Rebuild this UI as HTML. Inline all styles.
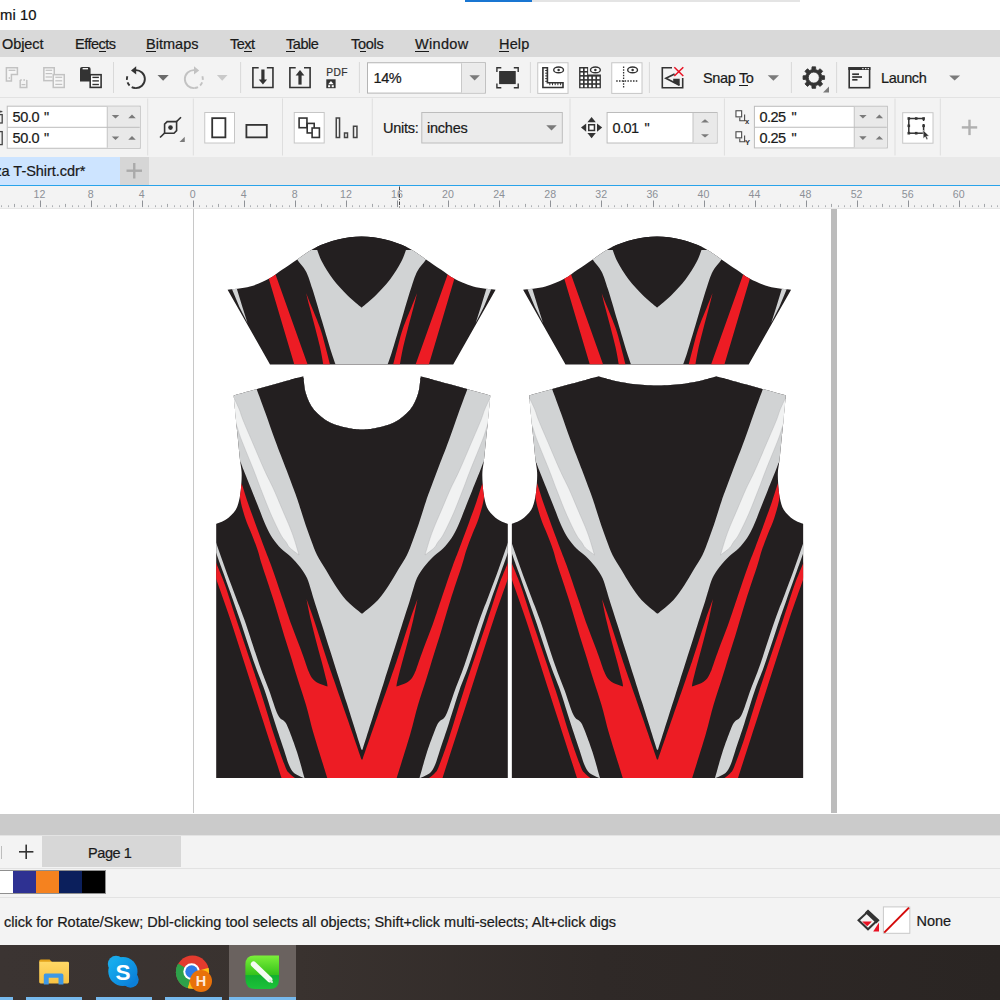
<!DOCTYPE html>
<html lang="en"><head><meta charset="utf-8"><title>CorelDRAW - T-Shirt.cdr</title>
<style>
html,body{margin:0;padding:0;background:#fff}
body{width:1000px;height:1000px;overflow:hidden;position:relative;font-family:"Liberation Sans", sans-serif}
#app{position:absolute;left:0;top:0;width:1000px;height:1000px;overflow:hidden;background:#fff}
.bar{position:absolute;left:0;width:1000px}
.t{position:absolute;white-space:nowrap;display:block;-webkit-text-stroke:0.22px currentColor}
.ul{position:absolute;display:block;height:1px}
.sep{position:absolute;width:1px;background:#dcdcdc}
.box{position:absolute;box-sizing:border-box;background:#fff;border:1px solid #b9b9b9}
.btn{position:absolute;box-sizing:border-box;background:#fff;border:1px solid #c4c4c4}
.ic{position:absolute;overflow:visible}
</style></head><body>
<div id="app">
<div class="bar" id="titlebar" style="top:0;height:30px;background:#fff"></div>
<div style="position:absolute;left:465px;top:0;width:67px;height:2px;background:#1976d2"></div>
<div style="position:absolute;left:532px;top:0;width:268px;height:2px;background:#e4e4e4"></div>
<div class="bar" id="menubar" style="top:30px;height:27px;background:#d9d9d9"></div>
<div class="bar" id="toolbar" style="top:57px;height:40px;background:#f3f3f3"></div>
<div class="bar" style="top:96.5px;height:1px;background:#e2e2e2"></div>
<div class="bar" id="propbar" style="top:97.5px;height:59px;background:#f3f3f3"></div>
<div class="bar" id="tabrow" style="top:156.5px;height:28.5px;background:#e9e9e9"></div>
<div style="position:absolute;left:0;top:157px;width:120px;height:28px;background:#cde4ff"></div>
<div style="position:absolute;left:120px;top:157px;width:28.5px;height:28px;background:#d6d6d6"></div>
<div class="bar" style="top:184.5px;height:1.2px;background:#29a3ea"></div>
<div class="bar" id="ruler" style="top:185.7px;height:22.8px;background:#f3f3f3"></div>
<div class="bar" style="top:207.5px;height:1px;background:#e6e6e6"></div>
<svg width="1000" height="23" viewBox="0 185.5 1000 23" style="position:absolute;left:0;top:185.5px" font-family='&quot;Liberation Sans&quot;, sans-serif'>
<rect x="40" y="200" width="1" height="6.6" fill="#8f9297"/>
<text x="39.5" y="197.8" font-size="10.6" fill="#8c9097" text-anchor="middle">12</text>
<rect x="91" y="200" width="1" height="6.6" fill="#8f9297"/>
<text x="90.6" y="197.8" font-size="10.6" fill="#8c9097" text-anchor="middle">8</text>
<rect x="142" y="200" width="1" height="6.6" fill="#8f9297"/>
<text x="141.6" y="197.8" font-size="10.6" fill="#8c9097" text-anchor="middle">4</text>
<rect x="193" y="200" width="1" height="6.6" fill="#8f9297"/>
<text x="192.7" y="197.8" font-size="10.6" fill="#8c9097" text-anchor="middle">0</text>
<rect x="244" y="200" width="1" height="6.6" fill="#8f9297"/>
<text x="243.8" y="197.8" font-size="10.6" fill="#8c9097" text-anchor="middle">4</text>
<rect x="295" y="200" width="1" height="6.6" fill="#8f9297"/>
<text x="294.8" y="197.8" font-size="10.6" fill="#8c9097" text-anchor="middle">8</text>
<rect x="346" y="200" width="1" height="6.6" fill="#8f9297"/>
<text x="345.9" y="197.8" font-size="10.6" fill="#8c9097" text-anchor="middle">12</text>
<rect x="397" y="200" width="1" height="6.6" fill="#8f9297"/>
<text x="397.0" y="197.8" font-size="10.6" fill="#8c9097" text-anchor="middle">16</text>
<rect x="448" y="200" width="1" height="6.6" fill="#8f9297"/>
<text x="448.0" y="197.8" font-size="10.6" fill="#8c9097" text-anchor="middle">20</text>
<rect x="499" y="200" width="1" height="6.6" fill="#8f9297"/>
<text x="499.1" y="197.8" font-size="10.6" fill="#8c9097" text-anchor="middle">24</text>
<rect x="550" y="200" width="1" height="6.6" fill="#8f9297"/>
<text x="550.2" y="197.8" font-size="10.6" fill="#8c9097" text-anchor="middle">28</text>
<rect x="601" y="200" width="1" height="6.6" fill="#8f9297"/>
<text x="601.2" y="197.8" font-size="10.6" fill="#8c9097" text-anchor="middle">32</text>
<rect x="653" y="200" width="1" height="6.6" fill="#8f9297"/>
<text x="652.3" y="197.8" font-size="10.6" fill="#8c9097" text-anchor="middle">36</text>
<rect x="704" y="200" width="1" height="6.6" fill="#8f9297"/>
<text x="703.4" y="197.8" font-size="10.6" fill="#8c9097" text-anchor="middle">40</text>
<rect x="755" y="200" width="1" height="6.6" fill="#8f9297"/>
<text x="754.4" y="197.8" font-size="10.6" fill="#8c9097" text-anchor="middle">44</text>
<rect x="806" y="200" width="1" height="6.6" fill="#8f9297"/>
<text x="805.5" y="197.8" font-size="10.6" fill="#8c9097" text-anchor="middle">48</text>
<rect x="857" y="200" width="1" height="6.6" fill="#8f9297"/>
<text x="856.6" y="197.8" font-size="10.6" fill="#8c9097" text-anchor="middle">52</text>
<rect x="908" y="200" width="1" height="6.6" fill="#8f9297"/>
<text x="907.7" y="197.8" font-size="10.6" fill="#8c9097" text-anchor="middle">56</text>
<rect x="959" y="200" width="1" height="6.6" fill="#8f9297"/>
<text x="958.7" y="197.8" font-size="10.6" fill="#8c9097" text-anchor="middle">60</text>
<rect x="1" y="204.8" width="1" height="1.8" fill="#adb0b4"/>
<rect x="8" y="204.8" width="1" height="1.8" fill="#adb0b4"/>
<rect x="14" y="203.4" width="1" height="3.2" fill="#a3a6aa"/>
<rect x="21" y="204.8" width="1" height="1.8" fill="#adb0b4"/>
<rect x="27" y="204.8" width="1" height="1.8" fill="#adb0b4"/>
<rect x="33" y="204.8" width="1" height="1.8" fill="#adb0b4"/>
<rect x="46" y="204.8" width="1" height="1.8" fill="#adb0b4"/>
<rect x="52" y="204.8" width="1" height="1.8" fill="#adb0b4"/>
<rect x="59" y="204.8" width="1" height="1.8" fill="#adb0b4"/>
<rect x="65" y="203.4" width="1" height="3.2" fill="#a3a6aa"/>
<rect x="72" y="204.8" width="1" height="1.8" fill="#adb0b4"/>
<rect x="78" y="204.8" width="1" height="1.8" fill="#adb0b4"/>
<rect x="84" y="204.8" width="1" height="1.8" fill="#adb0b4"/>
<rect x="97" y="204.8" width="1" height="1.8" fill="#adb0b4"/>
<rect x="104" y="204.8" width="1" height="1.8" fill="#adb0b4"/>
<rect x="110" y="204.8" width="1" height="1.8" fill="#adb0b4"/>
<rect x="116" y="203.4" width="1" height="3.2" fill="#a3a6aa"/>
<rect x="123" y="204.8" width="1" height="1.8" fill="#adb0b4"/>
<rect x="129" y="204.8" width="1" height="1.8" fill="#adb0b4"/>
<rect x="135" y="204.8" width="1" height="1.8" fill="#adb0b4"/>
<rect x="148" y="204.8" width="1" height="1.8" fill="#adb0b4"/>
<rect x="155" y="204.8" width="1" height="1.8" fill="#adb0b4"/>
<rect x="161" y="204.8" width="1" height="1.8" fill="#adb0b4"/>
<rect x="167" y="203.4" width="1" height="3.2" fill="#a3a6aa"/>
<rect x="174" y="204.8" width="1" height="1.8" fill="#adb0b4"/>
<rect x="180" y="204.8" width="1" height="1.8" fill="#adb0b4"/>
<rect x="187" y="204.8" width="1" height="1.8" fill="#adb0b4"/>
<rect x="199" y="204.8" width="1" height="1.8" fill="#adb0b4"/>
<rect x="206" y="204.8" width="1" height="1.8" fill="#adb0b4"/>
<rect x="212" y="204.8" width="1" height="1.8" fill="#adb0b4"/>
<rect x="218" y="203.4" width="1" height="3.2" fill="#a3a6aa"/>
<rect x="225" y="204.8" width="1" height="1.8" fill="#adb0b4"/>
<rect x="231" y="204.8" width="1" height="1.8" fill="#adb0b4"/>
<rect x="238" y="204.8" width="1" height="1.8" fill="#adb0b4"/>
<rect x="250" y="204.8" width="1" height="1.8" fill="#adb0b4"/>
<rect x="257" y="204.8" width="1" height="1.8" fill="#adb0b4"/>
<rect x="263" y="204.8" width="1" height="1.8" fill="#adb0b4"/>
<rect x="270" y="203.4" width="1" height="3.2" fill="#a3a6aa"/>
<rect x="276" y="204.8" width="1" height="1.8" fill="#adb0b4"/>
<rect x="282" y="204.8" width="1" height="1.8" fill="#adb0b4"/>
<rect x="289" y="204.8" width="1" height="1.8" fill="#adb0b4"/>
<rect x="301" y="204.8" width="1" height="1.8" fill="#adb0b4"/>
<rect x="308" y="204.8" width="1" height="1.8" fill="#adb0b4"/>
<rect x="314" y="204.8" width="1" height="1.8" fill="#adb0b4"/>
<rect x="321" y="203.4" width="1" height="3.2" fill="#a3a6aa"/>
<rect x="327" y="204.8" width="1" height="1.8" fill="#adb0b4"/>
<rect x="333" y="204.8" width="1" height="1.8" fill="#adb0b4"/>
<rect x="340" y="204.8" width="1" height="1.8" fill="#adb0b4"/>
<rect x="352" y="204.8" width="1" height="1.8" fill="#adb0b4"/>
<rect x="359" y="204.8" width="1" height="1.8" fill="#adb0b4"/>
<rect x="365" y="204.8" width="1" height="1.8" fill="#adb0b4"/>
<rect x="372" y="203.4" width="1" height="3.2" fill="#a3a6aa"/>
<rect x="378" y="204.8" width="1" height="1.8" fill="#adb0b4"/>
<rect x="384" y="204.8" width="1" height="1.8" fill="#adb0b4"/>
<rect x="391" y="204.8" width="1" height="1.8" fill="#adb0b4"/>
<rect x="404" y="204.8" width="1" height="1.8" fill="#adb0b4"/>
<rect x="410" y="204.8" width="1" height="1.8" fill="#adb0b4"/>
<rect x="416" y="204.8" width="1" height="1.8" fill="#adb0b4"/>
<rect x="423" y="203.4" width="1" height="3.2" fill="#a3a6aa"/>
<rect x="429" y="204.8" width="1" height="1.8" fill="#adb0b4"/>
<rect x="435" y="204.8" width="1" height="1.8" fill="#adb0b4"/>
<rect x="442" y="204.8" width="1" height="1.8" fill="#adb0b4"/>
<rect x="455" y="204.8" width="1" height="1.8" fill="#adb0b4"/>
<rect x="461" y="204.8" width="1" height="1.8" fill="#adb0b4"/>
<rect x="467" y="204.8" width="1" height="1.8" fill="#adb0b4"/>
<rect x="474" y="203.4" width="1" height="3.2" fill="#a3a6aa"/>
<rect x="480" y="204.8" width="1" height="1.8" fill="#adb0b4"/>
<rect x="487" y="204.8" width="1" height="1.8" fill="#adb0b4"/>
<rect x="493" y="204.8" width="1" height="1.8" fill="#adb0b4"/>
<rect x="506" y="204.8" width="1" height="1.8" fill="#adb0b4"/>
<rect x="512" y="204.8" width="1" height="1.8" fill="#adb0b4"/>
<rect x="518" y="204.8" width="1" height="1.8" fill="#adb0b4"/>
<rect x="525" y="203.4" width="1" height="3.2" fill="#a3a6aa"/>
<rect x="531" y="204.8" width="1" height="1.8" fill="#adb0b4"/>
<rect x="538" y="204.8" width="1" height="1.8" fill="#adb0b4"/>
<rect x="544" y="204.8" width="1" height="1.8" fill="#adb0b4"/>
<rect x="557" y="204.8" width="1" height="1.8" fill="#adb0b4"/>
<rect x="563" y="204.8" width="1" height="1.8" fill="#adb0b4"/>
<rect x="570" y="204.8" width="1" height="1.8" fill="#adb0b4"/>
<rect x="576" y="203.4" width="1" height="3.2" fill="#a3a6aa"/>
<rect x="582" y="204.8" width="1" height="1.8" fill="#adb0b4"/>
<rect x="589" y="204.8" width="1" height="1.8" fill="#adb0b4"/>
<rect x="595" y="204.8" width="1" height="1.8" fill="#adb0b4"/>
<rect x="608" y="204.8" width="1" height="1.8" fill="#adb0b4"/>
<rect x="614" y="204.8" width="1" height="1.8" fill="#adb0b4"/>
<rect x="621" y="204.8" width="1" height="1.8" fill="#adb0b4"/>
<rect x="627" y="203.4" width="1" height="3.2" fill="#a3a6aa"/>
<rect x="633" y="204.8" width="1" height="1.8" fill="#adb0b4"/>
<rect x="640" y="204.8" width="1" height="1.8" fill="#adb0b4"/>
<rect x="646" y="204.8" width="1" height="1.8" fill="#adb0b4"/>
<rect x="659" y="204.8" width="1" height="1.8" fill="#adb0b4"/>
<rect x="665" y="204.8" width="1" height="1.8" fill="#adb0b4"/>
<rect x="672" y="204.8" width="1" height="1.8" fill="#adb0b4"/>
<rect x="678" y="203.4" width="1" height="3.2" fill="#a3a6aa"/>
<rect x="684" y="204.8" width="1" height="1.8" fill="#adb0b4"/>
<rect x="691" y="204.8" width="1" height="1.8" fill="#adb0b4"/>
<rect x="697" y="204.8" width="1" height="1.8" fill="#adb0b4"/>
<rect x="710" y="204.8" width="1" height="1.8" fill="#adb0b4"/>
<rect x="716" y="204.8" width="1" height="1.8" fill="#adb0b4"/>
<rect x="723" y="204.8" width="1" height="1.8" fill="#adb0b4"/>
<rect x="729" y="203.4" width="1" height="3.2" fill="#a3a6aa"/>
<rect x="735" y="204.8" width="1" height="1.8" fill="#adb0b4"/>
<rect x="742" y="204.8" width="1" height="1.8" fill="#adb0b4"/>
<rect x="748" y="204.8" width="1" height="1.8" fill="#adb0b4"/>
<rect x="761" y="204.8" width="1" height="1.8" fill="#adb0b4"/>
<rect x="767" y="204.8" width="1" height="1.8" fill="#adb0b4"/>
<rect x="774" y="204.8" width="1" height="1.8" fill="#adb0b4"/>
<rect x="780" y="203.4" width="1" height="3.2" fill="#a3a6aa"/>
<rect x="787" y="204.8" width="1" height="1.8" fill="#adb0b4"/>
<rect x="793" y="204.8" width="1" height="1.8" fill="#adb0b4"/>
<rect x="799" y="204.8" width="1" height="1.8" fill="#adb0b4"/>
<rect x="812" y="204.8" width="1" height="1.8" fill="#adb0b4"/>
<rect x="818" y="204.8" width="1" height="1.8" fill="#adb0b4"/>
<rect x="825" y="204.8" width="1" height="1.8" fill="#adb0b4"/>
<rect x="831" y="203.4" width="1" height="3.2" fill="#a3a6aa"/>
<rect x="838" y="204.8" width="1" height="1.8" fill="#adb0b4"/>
<rect x="844" y="204.8" width="1" height="1.8" fill="#adb0b4"/>
<rect x="850" y="204.8" width="1" height="1.8" fill="#adb0b4"/>
<rect x="863" y="204.8" width="1" height="1.8" fill="#adb0b4"/>
<rect x="870" y="204.8" width="1" height="1.8" fill="#adb0b4"/>
<rect x="876" y="204.8" width="1" height="1.8" fill="#adb0b4"/>
<rect x="882" y="203.4" width="1" height="3.2" fill="#a3a6aa"/>
<rect x="889" y="204.8" width="1" height="1.8" fill="#adb0b4"/>
<rect x="895" y="204.8" width="1" height="1.8" fill="#adb0b4"/>
<rect x="901" y="204.8" width="1" height="1.8" fill="#adb0b4"/>
<rect x="914" y="204.8" width="1" height="1.8" fill="#adb0b4"/>
<rect x="921" y="204.8" width="1" height="1.8" fill="#adb0b4"/>
<rect x="927" y="204.8" width="1" height="1.8" fill="#adb0b4"/>
<rect x="933" y="203.4" width="1" height="3.2" fill="#a3a6aa"/>
<rect x="940" y="204.8" width="1" height="1.8" fill="#adb0b4"/>
<rect x="946" y="204.8" width="1" height="1.8" fill="#adb0b4"/>
<rect x="953" y="204.8" width="1" height="1.8" fill="#adb0b4"/>
<rect x="965" y="204.8" width="1" height="1.8" fill="#adb0b4"/>
<rect x="972" y="204.8" width="1" height="1.8" fill="#adb0b4"/>
<rect x="978" y="204.8" width="1" height="1.8" fill="#adb0b4"/>
<rect x="984" y="203.4" width="1" height="3.2" fill="#a3a6aa"/>
<rect x="991" y="204.8" width="1" height="1.8" fill="#adb0b4"/>
<rect x="997" y="204.8" width="1" height="1.8" fill="#adb0b4"/>
<line x1="399.5" y1="186" x2="399.5" y2="209" stroke="#4a4a4a" stroke-width="1" stroke-dasharray="3.5 1.5 1 1.5"/>
</svg>
<div class="bar" id="canvas" style="top:208.5px;height:605px;background:#fff;overflow:hidden">
<div style="position:absolute;left:192.7px;top:0;width:1.5px;height:604.5px;background:#c8c8c8"></div>
<div style="position:absolute;left:831px;top:0;width:6px;height:604.2px;background:#bcbcbc"></div>
<div style="position:absolute;left:0;top:-0.5px;width:1000px;height:604px"><svg id="art" width="1000" height="604" viewBox="0 208 1000 604" style="position:absolute;left:0;top:0">
<defs>
<clipPath id="cf"><path d="M303.3,376.2C291.7,379.4 245.3,392.2 233.7,395.4C234.1,399.5 235.3,412.6 236.0,420.0 C236.7,427.4 237.3,433.3 238.0,440.0 C238.7,446.7 239.4,454.7 240.0,460.0 C240.6,465.3 241.4,468.0 241.6,472.0 C241.8,476.0 241.6,479.7 241.3,484.0 C241.0,488.3 240.6,493.7 239.6,498.0 C238.6,502.3 237.9,506.4 235.6,510.0 C233.3,513.6 229.2,517.3 226.0,519.6 C222.8,521.9 217.8,523.3 216.2,524.0L216.2,778.0C264.8,778.0 459.2,778.0 507.8,778.0L507.8,524.0C506.2,523.3 501.2,521.9 498.0,519.6 C494.8,517.3 490.7,513.6 488.4,510.0 C486.1,506.4 485.3,502.3 484.4,498.0 C483.4,493.7 483.0,488.3 482.7,484.0 C482.4,479.7 482.2,476.0 482.4,472.0 C482.6,468.0 483.4,465.3 484.0,460.0 C484.6,454.7 485.3,446.7 486.0,440.0 C486.7,433.3 487.3,427.4 488.0,420.0 C488.7,412.6 489.9,399.5 490.3,395.4C478.7,392.2 432.3,379.4 420.7,376.2C420.2,379.1 419.8,388.2 418.0,393.8 C416.2,399.4 414.0,405.0 410.0,409.8 C406.0,414.6 399.9,419.5 394.0,422.6 C388.1,425.7 380.1,427.1 374.8,428.2 C369.5,429.3 364.1,429.3 362.0,429.5C359.9,429.3 354.5,429.3 349.2,428.2 C343.9,427.1 335.9,425.7 330.0,422.6 C324.1,419.5 318.0,414.6 314.0,409.8 C310.0,405.0 307.8,399.4 306.0,393.8 C304.2,388.2 303.8,379.1 303.3,376.2Z"/></clipPath>
<clipPath id="cb"><path d="M303.3,376.2C291.7,379.4 245.3,392.2 233.7,395.4C234.1,399.5 235.3,412.6 236.0,420.0 C236.7,427.4 237.3,433.3 238.0,440.0 C238.7,446.7 239.4,454.7 240.0,460.0 C240.6,465.3 241.4,468.0 241.6,472.0 C241.8,476.0 241.6,479.7 241.3,484.0 C241.0,488.3 240.6,493.7 239.6,498.0 C238.6,502.3 237.9,506.4 235.6,510.0 C233.3,513.6 229.2,517.3 226.0,519.6 C222.8,521.9 217.8,523.3 216.2,524.0L216.2,778.0C264.8,778.0 459.2,778.0 507.8,778.0L507.8,524.0C506.2,523.3 501.2,521.9 498.0,519.6 C494.8,517.3 490.7,513.6 488.4,510.0 C486.1,506.4 485.3,502.3 484.4,498.0 C483.4,493.7 483.0,488.3 482.7,484.0 C482.4,479.7 482.2,476.0 482.4,472.0 C482.6,468.0 483.4,465.3 484.0,460.0 C484.6,454.7 485.3,446.7 486.0,440.0 C486.7,433.3 487.3,427.4 488.0,420.0 C488.7,412.6 489.9,399.5 490.3,395.4C478.7,392.2 432.3,379.4 420.7,376.2C417.9,377.0 410.1,379.6 404.0,381.0 C397.9,382.4 391.0,383.5 384.0,384.3 C377.0,385.1 365.7,385.4 362.0,385.6C358.3,385.4 347.0,385.1 340.0,384.3 C333.0,383.5 326.1,382.4 320.0,381.0 C313.9,379.6 306.1,377.0 303.3,376.2Z"/></clipPath>
<clipPath id="cs"><path d="M227.6,289.8C231.3,289.3 243.1,288.5 250.0,286.6 C256.9,284.7 263.9,281.4 269.2,278.6 C274.5,275.8 277.3,273.0 282.0,269.8 C286.7,266.6 291.6,263.1 297.2,259.4 C302.8,255.7 308.8,250.7 315.6,247.4 C322.4,244.1 330.3,241.2 338.0,239.4 C345.7,237.6 353.7,236.4 361.6,236.4 C369.5,236.4 377.5,237.6 385.2,239.4 C392.9,241.2 400.8,244.1 407.6,247.4 C414.4,250.7 420.4,255.7 426.0,259.4 C431.6,263.1 436.5,266.6 441.2,269.8 C445.9,273.0 448.7,275.8 454.0,278.6 C459.3,281.4 466.3,284.7 473.2,286.6 C480.1,288.5 491.9,289.3 495.6,289.8L453.2,364.5C422.7,364.5 300.5,364.5 270.0,364.5Z"/></clipPath>
<g id="bd">
<rect x="200" y="370" width="330" height="420" fill="#231f20"/>
<path d="M211.0,550.0C211.9,552.2 213.9,557.2 216.2,563.0 C218.5,568.8 221.6,575.5 225.0,585.0 C228.4,594.5 230.7,602.5 236.5,620.0 C242.3,637.5 253.6,670.3 260.0,690.0 C266.4,709.7 270.8,725.3 275.0,738.0 C279.2,750.7 282.7,760.2 285.0,766.0 C287.3,771.8 287.3,771.0 289.0,773.0 C290.7,775.0 294.0,777.2 295.0,778.0L281.5,778.0C277.1,764.3 263.5,722.3 255.0,696.0 C246.5,669.7 237.0,639.5 230.5,620.0 C224.0,600.5 220.1,590.2 216.2,579.0 C212.3,567.8 208.5,557.3 207.0,553.0Z" fill="#ed1c24"/>
<path d="M211.0,550.0C211.9,552.2 213.9,557.2 216.2,563.0 C218.5,568.8 221.6,575.5 225.0,585.0 C228.4,594.5 230.7,602.5 236.5,620.0 C242.3,637.5 253.6,670.3 260.0,690.0 C266.4,709.7 270.8,725.3 275.0,738.0 C279.2,750.7 282.7,760.2 285.0,766.0 C287.3,771.8 287.3,771.0 289.0,773.0 C290.7,775.0 294.0,777.2 295.0,778.0L281.5,778.0C277.1,764.3 263.5,722.3 255.0,696.0 C246.5,669.7 237.0,639.5 230.5,620.0 C224.0,600.5 220.1,590.2 216.2,579.0 C212.3,567.8 208.5,557.3 207.0,553.0Z" fill="#ed1c24" transform="translate(724.0,0) scale(-1,1)"/>
<path d="M208.0,520.0C209.4,523.8 213.4,535.0 216.2,543.0 C219.0,551.0 221.9,559.3 225.0,568.0 C228.1,576.7 231.8,586.3 235.0,595.0 C238.2,603.7 240.4,608.3 244.5,620.0 C248.6,631.7 255.4,653.3 259.5,665.0 C263.6,676.7 265.9,681.7 269.0,690.0 C272.1,698.3 275.3,709.7 278.0,715.0 C280.7,720.3 283.2,719.5 285.0,722.0 C286.8,724.5 287.0,725.0 289.0,730.0 C291.0,735.0 294.4,744.0 297.0,752.0 C299.6,760.0 303.2,773.7 304.5,778.0L304.0,778.0C302.3,777.2 296.5,775.2 294.0,773.0 C291.5,770.8 290.7,768.8 289.0,765.0 C287.3,761.2 286.3,757.0 284.0,750.0 C281.7,743.0 278.2,733.0 275.0,723.0 C271.8,713.0 267.8,699.7 264.5,690.0 C261.2,680.3 259.1,676.7 255.0,665.0 C250.9,653.3 243.7,630.8 240.0,620.0 C236.3,609.2 235.8,608.0 233.0,600.0 C230.2,592.0 225.8,579.8 223.0,572.0 C220.2,564.2 219.0,561.0 216.2,553.0 C213.4,545.0 207.7,528.8 206.0,524.0Z" fill="#d1d3d4"/>
<path d="M208.0,520.0C209.4,523.8 213.4,535.0 216.2,543.0 C219.0,551.0 221.9,559.3 225.0,568.0 C228.1,576.7 231.8,586.3 235.0,595.0 C238.2,603.7 240.4,608.3 244.5,620.0 C248.6,631.7 255.4,653.3 259.5,665.0 C263.6,676.7 265.9,681.7 269.0,690.0 C272.1,698.3 275.3,709.7 278.0,715.0 C280.7,720.3 283.2,719.5 285.0,722.0 C286.8,724.5 287.0,725.0 289.0,730.0 C291.0,735.0 294.4,744.0 297.0,752.0 C299.6,760.0 303.2,773.7 304.5,778.0L304.0,778.0C302.3,777.2 296.5,775.2 294.0,773.0 C291.5,770.8 290.7,768.8 289.0,765.0 C287.3,761.2 286.3,757.0 284.0,750.0 C281.7,743.0 278.2,733.0 275.0,723.0 C271.8,713.0 267.8,699.7 264.5,690.0 C261.2,680.3 259.1,676.7 255.0,665.0 C250.9,653.3 243.7,630.8 240.0,620.0 C236.3,609.2 235.8,608.0 233.0,600.0 C230.2,592.0 225.8,579.8 223.0,572.0 C220.2,564.2 219.0,561.0 216.2,553.0 C213.4,545.0 207.7,528.8 206.0,524.0Z" fill="#d1d3d4" transform="translate(724.0,0) scale(-1,1)"/>
<path d="M241.6,483.2C242.6,486.3 245.4,495.5 247.6,502.0 C249.8,508.5 251.9,514.0 254.8,522.0 C257.7,530.0 262.5,542.8 265.2,550.0 C267.9,557.2 268.0,556.7 271.0,565.0 C274.0,573.3 279.6,590.0 283.0,600.0 C286.4,610.0 288.5,616.7 291.5,625.0 C294.5,633.3 298.2,642.5 301.0,650.0 C303.8,657.5 306.8,666.7 308.0,670.0C308.7,671.3 310.3,675.8 312.0,678.0 C313.7,680.2 315.4,681.6 318.0,683.0 C320.6,684.4 326.0,686.0 327.6,686.6C327.4,685.5 327.5,684.4 326.4,680.0 C325.3,675.6 323.0,666.7 321.2,660.0 C319.4,653.3 317.5,646.7 315.8,640.0 C314.1,633.3 312.4,626.8 310.8,620.0 C309.2,613.2 307.2,602.5 306.5,599.0C307.8,602.5 311.7,613.2 314.0,620.0 C316.3,626.8 318.3,633.3 320.5,640.0 C322.7,646.7 324.8,653.3 327.0,660.0 C329.2,666.7 330.6,670.5 333.9,680.0 C337.2,689.5 342.2,703.8 346.8,717.0 C351.4,730.2 359.1,752.3 361.5,759.4L362.5,759.4C364.9,752.3 372.6,730.2 377.2,717.0 C381.8,703.8 386.8,689.5 390.1,680.0 C393.4,670.5 394.8,666.7 397.0,660.0 C399.2,653.3 401.3,646.7 403.5,640.0 C405.7,633.3 407.7,626.8 410.0,620.0 C412.3,613.2 416.2,602.5 417.5,599.0C416.8,602.5 414.8,613.2 413.2,620.0 C411.6,626.8 409.9,633.3 408.2,640.0 C406.5,646.7 404.6,653.3 402.8,660.0 C401.0,666.7 398.7,675.6 397.6,680.0 C396.5,684.4 396.6,685.5 396.4,686.6C398.0,686.0 403.4,684.4 406.0,683.0 C408.6,681.6 410.3,680.2 412.0,678.0 C413.7,675.8 415.3,671.3 416.0,670.0C417.2,666.7 420.2,657.5 423.0,650.0 C425.8,642.5 429.5,633.3 432.5,625.0 C435.5,616.7 437.6,610.0 441.0,600.0 C444.4,590.0 450.0,573.3 453.0,565.0 C456.0,556.7 456.1,557.2 458.8,550.0 C461.5,542.8 466.3,530.0 469.2,522.0 C472.1,514.0 474.2,508.5 476.4,502.0 C478.6,495.5 481.4,486.3 482.4,483.2C482.7,485.5 484.6,491.4 484.0,497.2 C483.4,503.0 480.7,511.9 478.8,518.0 C476.9,524.1 474.5,528.7 472.4,534.0 C470.3,539.3 468.1,544.8 466.4,550.0 C464.7,555.2 464.6,556.7 462.0,565.0 C459.4,573.3 453.9,589.2 450.5,600.0 C447.1,610.8 444.2,621.0 441.5,630.0 C438.8,639.0 436.6,645.7 434.0,654.0 C431.4,662.3 428.7,671.5 426.0,680.0 C423.3,688.5 420.7,695.8 418.0,705.0 C415.3,714.2 413.6,722.8 410.0,735.0 C406.4,747.2 398.9,770.8 396.7,778.0L327.3,778.0C325.1,770.8 317.6,747.2 314.0,735.0 C310.4,722.8 308.7,714.2 306.0,705.0 C303.3,695.8 300.7,688.5 298.0,680.0 C295.3,671.5 292.6,662.3 290.0,654.0 C287.4,645.7 285.2,639.0 282.5,630.0 C279.8,621.0 276.9,610.8 273.5,600.0 C270.1,589.2 264.6,573.3 262.0,565.0 C259.4,556.7 259.3,555.2 257.6,550.0 C255.9,544.8 253.7,539.3 251.6,534.0 C249.5,528.7 247.1,524.1 245.2,518.0 C243.3,511.9 240.6,503.0 240.0,497.2 C239.4,491.4 241.3,485.5 241.6,483.2Z" fill="#ed1c24"/>
<path d="M226.0,380.0C226.0,390.0 223.5,426.2 226.0,440.0 C228.5,453.8 238.5,459.2 241.0,463.0C241.4,464.2 241.8,465.5 243.6,470.0 C245.4,474.5 249.2,484.0 251.6,490.0 C254.0,496.0 255.6,500.0 258.0,506.0 C260.4,512.0 263.6,520.7 266.0,526.0 C268.4,531.3 269.9,534.2 272.4,538.0 C274.9,541.8 278.1,545.5 281.0,548.5 C283.9,551.5 286.8,552.9 290.0,556.0 C293.2,559.1 297.2,563.3 300.0,567.0 C302.8,570.7 305.2,574.2 307.0,578.0 C308.8,581.8 309.8,586.3 311.0,590.0 C312.2,593.7 312.2,594.2 314.0,600.0 C315.8,605.8 319.4,616.7 322.0,625.0 C324.6,633.3 327.0,640.8 329.9,650.0 C332.8,659.2 336.7,671.4 339.4,680.0 C342.1,688.6 342.6,690.2 346.3,701.8 C350.0,713.4 359.0,741.8 361.5,749.8L362.5,749.8C365.0,741.8 374.0,713.4 377.7,701.8 C381.4,690.2 381.9,688.6 384.6,680.0 C387.3,671.4 391.2,659.2 394.1,650.0 C397.0,640.8 399.4,633.3 402.0,625.0 C404.6,616.7 408.2,605.8 410.0,600.0 C411.8,594.2 411.8,593.7 413.0,590.0 C414.2,586.3 415.2,581.8 417.0,578.0 C418.8,574.2 421.2,570.7 424.0,567.0 C426.8,563.3 430.8,559.1 434.0,556.0 C437.2,552.9 440.1,551.5 443.0,548.5 C445.9,545.5 449.1,541.8 451.6,538.0 C454.1,534.2 455.6,531.3 458.0,526.0 C460.4,520.7 463.6,512.0 466.0,506.0 C468.4,500.0 470.0,496.0 472.4,490.0 C474.8,484.0 478.6,474.5 480.4,470.0 C482.2,465.5 482.6,464.2 483.0,463.0C485.5,459.2 495.5,453.8 498.0,440.0 C500.5,426.2 498.0,390.0 498.0,380.0Z" fill="#d1d3d4"/>
<path d="M252.8,378.0C253.5,379.9 256.1,387.6 256.8,389.5C258.3,393.6 262.8,405.6 265.8,414.0 C268.8,422.4 271.6,430.7 275.0,440.0 C278.4,449.3 283.3,461.7 286.5,470.0 C289.7,478.3 292.1,485.0 294.0,490.0 C295.9,495.0 295.9,495.0 297.6,500.0 C299.3,505.0 301.8,513.3 304.0,520.0 C306.2,526.7 308.8,534.2 311.0,540.0 C313.2,545.8 314.5,550.0 317.0,555.0 C319.5,560.0 323.0,565.0 326.0,570.0 C329.0,575.0 331.7,580.0 335.0,585.0 C338.3,590.0 341.6,595.2 346.0,600.0 C350.4,604.8 358.9,611.2 361.5,613.5L362.5,613.5C365.1,611.2 373.6,604.8 378.0,600.0 C382.4,595.2 385.7,590.0 389.0,585.0 C392.3,580.0 395.0,575.0 398.0,570.0 C401.0,565.0 404.5,560.0 407.0,555.0 C409.5,550.0 410.8,545.8 413.0,540.0 C415.2,534.2 417.8,526.7 420.0,520.0 C422.2,513.3 424.7,505.0 426.4,500.0 C428.1,495.0 428.1,495.0 430.0,490.0 C431.9,485.0 434.3,478.3 437.5,470.0 C440.7,461.7 445.6,449.3 449.0,440.0 C452.4,430.7 455.2,422.4 458.2,414.0 C461.2,405.6 465.7,393.6 467.2,389.5C467.9,387.6 470.5,379.9 471.2,378.0Z" fill="#231f20"/>
<path d="M234.5,399.0C235.3,400.8 238.1,406.5 239.5,410.0 C240.9,413.5 241.0,415.0 243.0,420.0 C245.0,425.0 247.9,431.7 251.5,440.0 C255.1,448.3 260.6,461.7 264.4,470.0 C268.1,478.3 271.0,483.3 274.0,490.0 C277.0,496.7 279.8,503.7 282.5,510.0 C285.2,516.3 288.0,522.6 290.0,527.6 C292.0,532.6 293.0,535.4 294.5,540.0 C296.0,544.6 298.2,552.5 299.0,555.0C297.5,553.8 292.2,550.2 290.0,548.0 C287.8,545.8 287.6,544.3 286.0,542.0 C284.4,539.7 282.9,538.7 280.4,534.0 C277.9,529.3 274.0,521.3 270.8,514.0 C267.6,506.7 264.1,497.3 261.2,490.0 C258.3,482.7 256.9,478.3 253.6,470.0 C250.3,461.7 244.2,447.0 241.5,440.0 C238.8,433.0 238.9,432.2 237.5,428.0 C236.1,423.8 234.2,419.8 233.0,415.0 C231.8,410.2 230.5,401.7 230.0,399.0Z" fill="#f1f2f2" stroke="#a7a9ac" stroke-width="0.35"/>
<path d="M234.5,399.0C235.3,400.8 238.1,406.5 239.5,410.0 C240.9,413.5 241.0,415.0 243.0,420.0 C245.0,425.0 247.9,431.7 251.5,440.0 C255.1,448.3 260.6,461.7 264.4,470.0 C268.1,478.3 271.0,483.3 274.0,490.0 C277.0,496.7 279.8,503.7 282.5,510.0 C285.2,516.3 288.0,522.6 290.0,527.6 C292.0,532.6 293.0,535.4 294.5,540.0 C296.0,544.6 298.2,552.5 299.0,555.0C297.5,553.8 292.2,550.2 290.0,548.0 C287.8,545.8 287.6,544.3 286.0,542.0 C284.4,539.7 282.9,538.7 280.4,534.0 C277.9,529.3 274.0,521.3 270.8,514.0 C267.6,506.7 264.1,497.3 261.2,490.0 C258.3,482.7 256.9,478.3 253.6,470.0 C250.3,461.7 244.2,447.0 241.5,440.0 C238.8,433.0 238.9,432.2 237.5,428.0 C236.1,423.8 234.2,419.8 233.0,415.0 C231.8,410.2 230.5,401.7 230.0,399.0Z" fill="#f1f2f2" stroke="#a7a9ac" stroke-width="0.35" transform="translate(724.0,0) scale(-1,1)"/>
</g>
<g id="sd">
<rect x="220" y="230" width="290" height="140" fill="#231f20"/>
<path d="M293.0,250.0C293.7,251.6 295.0,255.8 297.2,259.4 C299.4,263.0 303.5,266.5 306.0,271.4 C308.5,276.3 309.7,280.7 312.4,289.0 C315.1,297.3 318.8,310.3 322.0,321.0 C325.2,331.7 329.3,345.8 331.6,353.0 C333.9,360.2 334.9,362.6 335.6,364.5L387.6,364.5C388.3,362.6 389.3,360.2 391.6,353.0 C393.9,345.8 398.0,331.7 401.2,321.0 C404.4,310.3 408.1,297.3 410.8,289.0 C413.5,280.7 414.7,276.3 417.2,271.4 C419.7,266.5 423.8,263.0 426.0,259.4 C428.2,255.8 429.5,251.6 430.2,250.0Z" fill="#d1d3d4"/>
<path d="M312.0,232.0C312.7,234.6 314.7,242.4 316.4,247.4 C318.1,252.4 319.2,256.5 322.0,261.8 C324.8,267.1 328.9,273.8 333.2,279.4 C337.5,285.0 342.9,290.7 347.6,295.4 C352.3,300.1 359.1,305.4 361.4,307.4L361.8,307.4C364.1,305.4 370.9,300.1 375.6,295.4 C380.3,290.7 385.7,285.0 390.0,279.4 C394.3,273.8 398.4,267.1 401.2,261.8 C404.0,256.5 405.1,252.4 406.8,247.4 C408.5,242.4 410.5,234.6 411.2,232.0Z" fill="#231f20"/>
<path d="M266,269 L274.5,269 L275.9,275.4 L307.6,364.5 L294.3,364.5 L268.9,279 Z" fill="#ed1c24"/>
<path d="M266,269 L274.5,269 L275.9,275.4 L307.6,364.5 L294.3,364.5 L268.9,279 Z" fill="#ed1c24" transform="translate(723.2,0) scale(-1,1)"/>
<path d="M306.1,293.0C306.7,295.3 308.1,301.2 309.6,307.0 C311.1,312.8 313.5,321.3 315.2,328.0 C316.9,334.7 318.6,340.9 320.0,347.0 C321.4,353.1 322.8,361.6 323.3,364.5L330.0,364.5C329.2,361.2 326.6,351.1 325.0,345.0 C323.4,338.9 322.3,334.3 320.1,328.0 C317.9,321.7 314.0,312.8 311.7,307.0 C309.4,301.2 307.0,295.3 306.1,293.0Z" fill="#ed1c24"/>
<path d="M306.1,293.0C306.7,295.3 308.1,301.2 309.6,307.0 C311.1,312.8 313.5,321.3 315.2,328.0 C316.9,334.7 318.6,340.9 320.0,347.0 C321.4,353.1 322.8,361.6 323.3,364.5L330.0,364.5C329.2,361.2 326.6,351.1 325.0,345.0 C323.4,338.9 322.3,334.3 320.1,328.0 C317.9,321.7 314.0,312.8 311.7,307.0 C309.4,301.2 307.0,295.3 306.1,293.0Z" fill="#ed1c24" transform="translate(723.2,0) scale(-1,1)"/>
<path d="M231.5,288 L236.6,288 L242.4,307 L247.5,323 L239.4,307 Z" fill="#d1d3d4"/>
<path d="M231.5,288 L236.6,288 L242.4,307 L247.5,323 L239.4,307 Z" fill="#d1d3d4" transform="translate(723.2,0) scale(-1,1)"/>
</g>
</defs>
<g clip-path="url(#cs)"><use href="#sd"/></g>
<g transform="translate(295.5,0)"><g clip-path="url(#cs)"><use href="#sd"/></g></g>
<g clip-path="url(#cf)"><use href="#bd"/></g>
<g transform="translate(295.5,0)"><g clip-path="url(#cb)"><use href="#bd"/></g></g>
</svg></div>
</div>
<div class="bar" id="hscroll" style="top:813.5px;height:21.5px;background:#cbcbcb"></div>
<div class="bar" id="pagerow" style="top:835px;height:33px;background:#f3f3f3"></div>
<div class="bar" style="top:834.8px;height:1.2px;background:#e3e3e3"></div>
<div style="position:absolute;left:42px;top:836px;width:138.5px;height:31px;background:#d7d7d7"></div>
<div style="position:absolute;left:1px;top:845.5px;width:1.2px;height:13px;background:#bdbdbd"></div>
<div class="bar" style="top:867.5px;height:1px;background:#e2e2e2"></div>
<div class="bar" id="palrow" style="top:868.5px;height:28.5px;background:#f3f3f3"></div>
<div style="position:absolute;left:0.0px;top:870.8px;width:12.5px;height:23px;background:#ffffff"></div>
<div style="position:absolute;left:12.5px;top:870.8px;width:23.5px;height:23px;background:#2e3192"></div>
<div style="position:absolute;left:36.0px;top:870.8px;width:23.0px;height:23px;background:#f5821f"></div>
<div style="position:absolute;left:59.0px;top:870.8px;width:23.0px;height:23px;background:#0b1f5c"></div>
<div style="position:absolute;left:82.0px;top:870.8px;width:23.0px;height:23px;background:#000000"></div>
<div style="position:absolute;left:0;top:870.3px;width:105.5px;height:24px;box-sizing:border-box;border:1px solid #8f8f8f;border-left:none;background:none"></div>
<div class="bar" style="top:896.5px;height:1px;background:#e2e2e2"></div>
<div class="bar" id="status" style="top:897.5px;height:47px;background:#f3f3f3"></div>
<div class="bar" id="taskbar" style="top:944.5px;height:55.5px;background:linear-gradient(90deg,#3b3432 0%,#39322f 30%,#2f2927 60%,#2a2523 100%)"></div>
<div style="position:absolute;left:229px;top:944.5px;width:67px;height:55.5px;background:#6a625f"></div>
<div style="position:absolute;left:0.0px;top:997px;width:12.5px;height:3px;background:#76b9ed"></div>
<div style="position:absolute;left:25.6px;top:997px;width:56.9px;height:3px;background:#76b9ed"></div>
<div style="position:absolute;left:95.7px;top:997px;width:56.0px;height:3px;background:#76b9ed"></div>
<div style="position:absolute;left:165.0px;top:997px;width:56.5px;height:3px;background:#76b9ed"></div>
<div style="position:absolute;left:229.0px;top:997px;width:67.0px;height:3px;background:#76b9ed"></div>
<svg id="icons" width="1000" height="1000" viewBox="0 0 1000 1000" style="position:absolute;left:0;top:0">
<path d="M6.4,67.8 H17.4 V74.6 H11.4 V81 H6.4 Z" fill="#f6f6f6" stroke="#c2c2c2" stroke-width="1.5"/>
<line x1="8.60" y1="70.30" x2="15.40" y2="70.30" stroke="#c2c2c2" stroke-width="1.3" />
<line x1="8.60" y1="78.00" x2="10.00" y2="78.00" stroke="#c2c2c2" stroke-width="1.3" />
<path d="M20.2,80 V87.4 H26.8 V80" fill="none" stroke="#c2c2c2" stroke-width="1.5"/>
<line x1="20.20" y1="80.00" x2="26.80" y2="80.00" stroke="#c2c2c2" stroke-width="1.5" stroke-dasharray="1.6 1.6"/>
<line x1="21.50" y1="84.60" x2="25.40" y2="84.60" stroke="#c2c2c2" stroke-width="1.2" />
<rect x="43.85" y="67.75" width="10.40" height="12.90" fill="#f6f6f6" stroke="#c2c2c2" stroke-width="1.5"/>
<line x1="45.60" y1="70.30" x2="52.20" y2="70.30" stroke="#c2c2c2" stroke-width="1.2" />
<line x1="45.60" y1="73.60" x2="52.20" y2="73.60" stroke="#c2c2c2" stroke-width="1.2" />
<line x1="45.60" y1="77.00" x2="52.20" y2="77.00" stroke="#c2c2c2" stroke-width="1.2" />
<rect x="53.25" y="74.65" width="11.00" height="12.80" fill="#f6f6f6" stroke="#c2c2c2" stroke-width="1.5"/>
<line x1="55.30" y1="77.30" x2="62.20" y2="77.30" stroke="#c2c2c2" stroke-width="1.2" />
<line x1="55.30" y1="80.80" x2="62.20" y2="80.80" stroke="#c2c2c2" stroke-width="1.2" />
<line x1="55.30" y1="84.40" x2="62.20" y2="84.40" stroke="#c2c2c2" stroke-width="1.2" />
<path d="M80,81.4 V69 Q80,67 82,67 H88.6 Q90.6,67 90.6,69 V81.4 Z" fill="#333333"/>
<rect x="82.60" y="68.00" width="5.40" height="1.40" fill="#f3f3f3"/>
<rect x="90.20" y="74.70" width="10.90" height="12.70" fill="#ffffff" stroke="#333333" stroke-width="1.6"/>
<line x1="92.40" y1="77.40" x2="98.90" y2="77.40" stroke="#333333" stroke-width="1.4" />
<line x1="92.40" y1="80.90" x2="98.90" y2="80.90" stroke="#333333" stroke-width="1.4" />
<line x1="92.40" y1="84.50" x2="98.90" y2="84.50" stroke="#333333" stroke-width="1.4" />
<rect x="113.00" y="62.00" width="1.00" height="31.00" fill="#d9d9d9"/>
<path d="M135.12,70.13 A9.00,9.00 0 1 1 135.12,88.07" fill="none" stroke="#333333" stroke-width="1.9"/>
<path d="M135.12,88.07 A9.00,9.00 0 0 1 127.74,75.30" fill="none" stroke="#333333" stroke-width="1.9" stroke-dasharray="3.6 2.6"/>
<path d="M131.00,70.50 L136.20,66.30 L136.20,74.60 Z" fill="#333333"/>
<path d="M157.50,75.10 L168.75,75.10 L163.12,80.75 Z" fill="#6a6a6a"/>
<path d="M194.58,70.13 A9.00,9.00 0 1 0 194.58,88.07" fill="none" stroke="#c2c2c2" stroke-width="1.9"/>
<path d="M194.58,88.07 A9.00,9.00 0 0 0 201.96,75.30" fill="none" stroke="#c2c2c2" stroke-width="1.9" stroke-dasharray="3.6 2.6"/>
<path d="M199.20,70.50 L194.00,66.30 L194.00,74.60 Z" fill="#c2c2c2"/>
<path d="M216.90,75.10 L227.50,75.10 L222.20,80.75 Z" fill="#c9c9c9"/>
<rect x="240.10" y="62.00" width="1.00" height="31.00" fill="#d9d9d9"/>
<path d="M258.70,67.8 H252.90 V87.45 H272.95 V67.8 H266.85" fill="none" stroke="#333333" stroke-width="1.6"/>
<rect x="261.32" y="69.50" width="3.20" height="11.00" fill="#333333"/>
<path d="M258.73,79.4 L267.12,79.4 L262.93,84.6 Z" fill="#333333"/>
<path d="M295.70,67.8 H289.90 V87.45 H310.10 V67.8 H304.00" fill="none" stroke="#333333" stroke-width="1.6"/>
<rect x="298.40" y="74.50" width="3.20" height="10.10" fill="#333333"/>
<path d="M295.60,75.4 L304.40,75.4 L300.00,70 Z" fill="#333333"/>
<rect x="326.30" y="79.30" width="9.30" height="8.90" fill="#333333"/>
<path d="M328.2,84.2 L330.95,81 L333.7,84.2 Z" fill="#fff"/>
<rect x="328.10" y="85.20" width="2.10" height="2.00" fill="#fff"/>
<rect x="331.70" y="85.20" width="2.10" height="2.00" fill="#fff"/>
<rect x="358.90" y="62.00" width="1.00" height="31.00" fill="#d9d9d9"/>
<rect x="367.50" y="62.75" width="117.80" height="30.35" fill="#ffffff" stroke="#b4b4b4" stroke-width="1"/>
<rect x="461.50" y="63.25" width="23.30" height="29.35" fill="#ebebeb"/>
<rect x="461.00" y="63.25" width="1.00" height="29.35" fill="#c9c9c9"/>
<path d="M469.40,75.20 L479.90,75.20 L474.65,80.50 Z" fill="#7a7a7a"/>
<rect x="499.10" y="71.00" width="16.65" height="13.10" fill="#333333"/>
<path d="M496.90,71.90 V67.70 H501.30" fill="none" stroke="#333333" stroke-width="1.4"/>
<path d="M518.20,71.90 V67.70 H513.80" fill="none" stroke="#333333" stroke-width="1.4"/>
<path d="M496.90,83.60 V87.80 H501.30" fill="none" stroke="#333333" stroke-width="1.4"/>
<path d="M518.20,83.60 V87.80 H513.80" fill="none" stroke="#333333" stroke-width="1.4"/>
<rect x="529.90" y="62.00" width="1.00" height="31.00" fill="#d9d9d9"/>
<rect x="537.75" y="62.75" width="30.25" height="30.65" fill="#ffffff" stroke="#c6c6c6" stroke-width="1"/>
<path d="M542.9,67.8 H547.4 V82.8 H563 V87.5 H542.9 Z" fill="#fff" stroke="#333333" stroke-width="1.6"/>
<line x1="545.20" y1="70.50" x2="547.20" y2="70.50" stroke="#333333" stroke-width="1" />
<line x1="545.20" y1="73.20" x2="547.20" y2="73.20" stroke="#333333" stroke-width="1" />
<line x1="545.20" y1="75.90" x2="547.20" y2="75.90" stroke="#333333" stroke-width="1" />
<line x1="545.20" y1="78.60" x2="547.20" y2="78.60" stroke="#333333" stroke-width="1" />
<line x1="545.20" y1="81.30" x2="547.20" y2="81.30" stroke="#333333" stroke-width="1" />
<line x1="549.80" y1="83.00" x2="549.80" y2="85.20" stroke="#333333" stroke-width="1" />
<line x1="552.50" y1="83.00" x2="552.50" y2="85.20" stroke="#333333" stroke-width="1" />
<line x1="555.20" y1="83.00" x2="555.20" y2="85.20" stroke="#333333" stroke-width="1" />
<line x1="557.90" y1="83.00" x2="557.90" y2="85.20" stroke="#333333" stroke-width="1" />
<line x1="560.60" y1="83.00" x2="560.60" y2="85.20" stroke="#333333" stroke-width="1" />
<ellipse cx="558.60" cy="69.90" rx="4.9" ry="2.9" fill="#fff" stroke="#333333" stroke-width="1.4"/><circle cx="558.60" cy="69.90" r="1.25" fill="#333333"/>
<path d="M579.1,67 H588.1 V74.6 H600.9 V88.25 H579.1 Z" fill="#333333"/>
<rect x="580.50" y="68.50" width="2.50" height="2.50" fill="#fff"/>
<rect x="584.64" y="68.50" width="2.50" height="2.50" fill="#fff"/>
<rect x="580.50" y="72.57" width="2.50" height="2.50" fill="#fff"/>
<rect x="584.64" y="72.57" width="2.50" height="2.50" fill="#fff"/>
<rect x="580.50" y="76.64" width="2.50" height="2.50" fill="#fff"/>
<rect x="584.64" y="76.64" width="2.50" height="2.50" fill="#fff"/>
<rect x="588.78" y="76.64" width="2.50" height="2.50" fill="#fff"/>
<rect x="592.92" y="76.64" width="2.50" height="2.50" fill="#fff"/>
<rect x="597.06" y="76.64" width="2.50" height="2.50" fill="#fff"/>
<rect x="580.50" y="80.71" width="2.50" height="2.50" fill="#fff"/>
<rect x="584.64" y="80.71" width="2.50" height="2.50" fill="#fff"/>
<rect x="588.78" y="80.71" width="2.50" height="2.50" fill="#fff"/>
<rect x="592.92" y="80.71" width="2.50" height="2.50" fill="#fff"/>
<rect x="597.06" y="80.71" width="2.50" height="2.50" fill="#fff"/>
<rect x="580.50" y="84.78" width="2.50" height="2.50" fill="#fff"/>
<rect x="584.64" y="84.78" width="2.50" height="2.50" fill="#fff"/>
<rect x="588.78" y="84.78" width="2.50" height="2.50" fill="#fff"/>
<rect x="592.92" y="84.78" width="2.50" height="2.50" fill="#fff"/>
<rect x="597.06" y="84.78" width="2.50" height="2.50" fill="#fff"/>
<ellipse cx="595.40" cy="69.90" rx="4.9" ry="2.9" fill="#fff" stroke="#333333" stroke-width="1.4"/><circle cx="595.40" cy="69.90" r="1.25" fill="#333333"/>
<rect x="611.75" y="62.75" width="30.25" height="30.65" fill="#ffffff" stroke="#c6c6c6" stroke-width="1"/>
<line x1="623.60" y1="66.40" x2="623.60" y2="88.40" stroke="#333333" stroke-width="1.3" stroke-dasharray="1.5 1.3"/>
<line x1="616.20" y1="81.00" x2="637.60" y2="81.00" stroke="#333333" stroke-width="1.3" stroke-dasharray="1.5 1.3"/>
<ellipse cx="632.60" cy="69.90" rx="4.9" ry="2.9" fill="#fff" stroke="#333333" stroke-width="1.4"/><circle cx="632.60" cy="69.90" r="1.25" fill="#333333"/>
<rect x="648.90" y="62.00" width="1.00" height="31.00" fill="#d9d9d9"/>
<path d="M672,67.8 H662.3 V87.7 H682.7 V78" fill="none" stroke="#333333" stroke-width="1.6"/>
<path d="M674.6,74 L665.9,78.2 L679.4,85.3" fill="none" stroke="#333333" stroke-width="1.7"/>
<path d="M673.2,78.7 H679.7 V85.7 L673.2,82.2 Z" fill="#333333"/>
<line x1="674.30" y1="67.30" x2="683.30" y2="76.00" stroke="#e81123" stroke-width="1.5" />
<line x1="683.30" y1="67.30" x2="674.30" y2="76.00" stroke="#e81123" stroke-width="1.5" />
<path d="M767.75,75.30 L779.00,75.30 L773.38,80.70 Z" fill="#7a7a7a"/>
<rect x="790.90" y="62.00" width="1.00" height="31.00" fill="#d9d9d9"/>
<path d="M824.55,75.80 L824.55,79.40 L821.76,79.58 L820.83,81.82 L822.67,83.93 L820.13,86.47 L818.02,84.63 L815.78,85.56 L815.60,88.35 L812.00,88.35 L811.82,85.56 L809.58,84.63 L807.47,86.47 L804.93,83.93 L806.77,81.82 L805.84,79.58 L803.05,79.40 L803.05,75.80 L805.84,75.62 L806.77,73.38 L804.93,71.27 L807.47,68.73 L809.58,70.57 L811.82,69.64 L812.00,66.85 L815.60,66.85 L815.78,69.64 L818.02,70.57 L820.13,68.73 L822.67,71.27 L820.83,73.38 L821.76,75.62Z M808.30,77.60 a5.5,5.5 0 1 0 11,0 a5.5,5.5 0 1 0 -11,0Z" fill="#333333" fill-rule="evenodd" stroke="#333333" stroke-width="0.8" stroke-linejoin="round"/>
<path d="M829,86.6 V92.6 H823 Z" fill="#7a7a7a"/>
<rect x="836.10" y="62.00" width="1.00" height="31.00" fill="#d9d9d9"/>
<rect x="849.20" y="67.90" width="20.40" height="19.80" fill="#f6f6f6" stroke="#333333" stroke-width="1.6"/>
<rect x="848.40" y="67.10" width="22.00" height="2.90" fill="#333333"/>
<rect x="862.20" y="68.10" width="1.40" height="1.10" fill="#fff"/>
<rect x="865.00" y="68.10" width="1.40" height="1.10" fill="#fff"/>
<rect x="867.60" y="68.10" width="1.40" height="1.10" fill="#fff"/>
<line x1="852.20" y1="74.20" x2="859.00" y2="74.20" stroke="#333333" stroke-width="1.7" />
<line x1="852.20" y1="77.00" x2="862.00" y2="77.00" stroke="#333333" stroke-width="1.7" />
<line x1="852.20" y1="79.80" x2="857.50" y2="79.80" stroke="#333333" stroke-width="1.7" />
<path d="M949.20,75.50 L960.10,75.50 L954.65,80.60 Z" fill="#7a7a7a"/>
<rect x="-3.00" y="114.60" width="5.20" height="8.40" fill="none" stroke="#444" stroke-width="1.3"/>
<line x1="0.80" y1="110.60" x2="0.80" y2="112.60" stroke="#444" stroke-width="1" />
<line x1="-0.20" y1="111.60" x2="2.40" y2="111.60" stroke="#444" stroke-width="1" />
<rect x="-3.00" y="131.60" width="5.20" height="13.00" fill="none" stroke="#444" stroke-width="1.3"/>
<rect x="7.25" y="106.20" width="132.95" height="42.05" fill="#ffffff" stroke="#bcbcbc" stroke-width="1"/>
<rect x="107.25" y="106.70" width="32.45" height="41.05" fill="#e9e9e9"/>
<rect x="106.75" y="106.70" width="1.00" height="41.05" fill="#c4c4c4"/>
<rect x="7.75" y="126.80" width="131.95" height="1.00" fill="#bcbcbc"/>
<path d="M111.75,114.90 L119.25,114.90 L115.50,118.60 Z" fill="#7a7a7a"/>
<path d="M128.25,118.30 L135.75,118.30 L132.00,114.60 Z" fill="#7a7a7a"/>
<path d="M111.75,136.43 L119.25,136.43 L115.50,140.12 Z" fill="#7a7a7a"/>
<path d="M128.25,139.83 L135.75,139.83 L132.00,136.12 Z" fill="#7a7a7a"/>
<rect x="147.20" y="98.50" width="1.00" height="57.00" fill="#dedede"/>
<line x1="160.00" y1="137.50" x2="181.00" y2="117.25" stroke="#333333" stroke-width="1.7" />
<path d="M167.2,121.6 H176.6 V130.6 L174,133.2 H164.6 V124.2 Z" fill="#f3f3f3" stroke="#333333" stroke-width="1.6" stroke-linejoin="miter"/>
<circle cx="170.5" cy="127.6" r="2.3" fill="#333333"/>
<path d="M184.75,136.75 V142 H179.5 Z" fill="#7a7a7a"/>
<rect x="192.80" y="98.50" width="1.00" height="57.00" fill="#dedede"/>
<rect x="204.75" y="112.50" width="29.75" height="30.50" fill="#ffffff" stroke="#c6c6c6" stroke-width="1"/>
<rect x="212.20" y="118.15" width="13.20" height="19.20" fill="#fff" stroke="#333333" stroke-width="1.8"/>
<rect x="246.40" y="124.90" width="20.40" height="12.45" fill="none" stroke="#333333" stroke-width="1.8"/>
<rect x="282.00" y="98.50" width="1.00" height="57.00" fill="#dedede"/>
<rect x="294.25" y="112.50" width="29.95" height="30.50" fill="#ffffff" stroke="#c6c6c6" stroke-width="1"/>
<rect x="299.10" y="118.05" width="7.85" height="9.65" fill="#fff" stroke="#333333" stroke-width="1.6"/>
<rect x="307.20" y="123.40" width="7.00" height="9.55" fill="#fff" stroke="#333333" stroke-width="1.6"/>
<rect x="312.10" y="128.00" width="7.30" height="9.45" fill="#fff" stroke="#333333" stroke-width="1.6"/>
<rect x="336.25" y="118.00" width="3.30" height="19.50" fill="none" stroke="#444" stroke-width="1.5"/>
<rect x="344.50" y="133.00" width="3.00" height="4.50" fill="none" stroke="#444" stroke-width="1.5"/>
<rect x="353.50" y="126.25" width="3.45" height="11.25" fill="none" stroke="#444" stroke-width="1.5"/>
<rect x="371.75" y="98.50" width="1.00" height="57.00" fill="#dedede"/>
<rect x="421.80" y="112.50" width="140.50" height="30.50" fill="#ebebeb" stroke="#bdbdbd" stroke-width="1"/>
<path d="M546.25,125.20 L556.75,125.20 L551.50,130.40 Z" fill="#7a7a7a"/>
<rect x="569.50" y="98.50" width="1.00" height="57.00" fill="#dedede"/>
<rect x="588.75" y="124.75" width="5.70" height="5.70" fill="#fff" stroke="#333333" stroke-width="1.5"/>
<path d="M591.60,117.00 L587.40,122.20 L595.80,122.20 Z" fill="#333333"/>
<path d="M591.60,138.20 L587.40,133.00 L595.80,133.00 Z" fill="#333333"/>
<path d="M581.00,127.60 L586.20,123.40 L586.20,131.80 Z" fill="#333333"/>
<path d="M602.20,127.60 L597.00,123.40 L597.00,131.80 Z" fill="#333333"/>
<rect x="607.10" y="112.50" width="110.00" height="30.50" fill="#ffffff" stroke="#bcbcbc" stroke-width="1"/>
<rect x="693.00" y="113.00" width="23.60" height="29.50" fill="#e9e9e9"/>
<rect x="692.50" y="113.00" width="1.00" height="29.50" fill="#c4c4c4"/>
<path d="M701.00,122.60 L709.00,122.60 L705.00,119.20 Z" fill="#7a7a7a"/>
<path d="M701.00,134.20 L709.00,134.20 L705.00,137.60 Z" fill="#7a7a7a"/>
<rect x="723.90" y="98.50" width="1.00" height="57.00" fill="#dedede"/>
<rect x="735.95" y="110.75" width="5.70" height="6.10" fill="#fff" stroke="#4a4a4a" stroke-width="1.1"/>
<path d="M739.8,117.40 V120.80 H745.6 M744.6,114.60 V120.80" fill="none" stroke="#4a4a4a" stroke-width="1.1"/>
<text x="745.0" y="124.40" font-size="7.6" font-weight="bold" fill="#333" font-family="Liberation Sans, sans-serif">x</text>
<rect x="735.95" y="131.75" width="5.70" height="6.10" fill="#fff" stroke="#4a4a4a" stroke-width="1.1"/>
<path d="M739.8,138.40 V141.80 H745.6 M744.6,135.60 V141.80" fill="none" stroke="#4a4a4a" stroke-width="1.1"/>
<text x="745.0" y="145.40" font-size="7.6" font-weight="bold" fill="#333" font-family="Liberation Sans, sans-serif">Y</text>
<rect x="754.40" y="106.30" width="132.90" height="41.60" fill="#ffffff" stroke="#bcbcbc" stroke-width="1"/>
<rect x="854.25" y="106.80" width="32.55" height="40.60" fill="#e9e9e9"/>
<rect x="853.75" y="106.80" width="1.00" height="40.60" fill="#c4c4c4"/>
<rect x="754.90" y="126.75" width="131.90" height="1.00" fill="#bcbcbc"/>
<path d="M859.20,114.93 L866.60,114.93 L862.90,118.62 Z" fill="#7a7a7a"/>
<path d="M875.70,118.33 L883.10,118.33 L879.40,114.62 Z" fill="#7a7a7a"/>
<path d="M859.20,136.22 L866.60,136.22 L862.90,139.92 Z" fill="#7a7a7a"/>
<path d="M875.70,139.62 L883.10,139.62 L879.40,135.92 Z" fill="#7a7a7a"/>
<rect x="894.50" y="98.50" width="1.00" height="57.00" fill="#dedede"/>
<rect x="902.70" y="112.70" width="30.30" height="30.50" fill="#ffffff" stroke="#c6c6c6" stroke-width="1"/>
<rect x="908.80" y="118.50" width="14.80" height="14.70" fill="none" stroke="#333333" stroke-width="1.5"/>
<rect x="907.50" y="117.20" width="2.60" height="2.60" fill="#333333"/>
<rect x="914.90" y="117.20" width="2.60" height="2.60" fill="#333333"/>
<rect x="922.30" y="117.20" width="2.60" height="2.60" fill="#333333"/>
<rect x="907.50" y="124.50" width="2.60" height="2.60" fill="#333333"/>
<rect x="922.30" y="124.50" width="2.60" height="2.60" fill="#333333"/>
<rect x="907.50" y="131.90" width="2.60" height="2.60" fill="#333333"/>
<rect x="914.90" y="131.90" width="2.60" height="2.60" fill="#333333"/>
<rect x="920.60" y="121.00" width="5.40" height="3.00" fill="#fff"/>
<path d="M923.2,130.2 L923.2,138.6 L925.2,136.8 L926.6,139.8 L928,139.1 L926.6,136.2 L929.2,136 Z" fill="#333333" stroke="#fff" stroke-width="0.5"/>
<rect x="939.80" y="98.50" width="1.00" height="57.00" fill="#dedede"/>
<rect x="961.80" y="126.20" width="15.40" height="2.40" fill="#b0b0b0"/>
<rect x="968.30" y="119.70" width="2.40" height="15.40" fill="#b0b0b0"/>
<rect x="126.50" y="169.50" width="15.50" height="2.40" fill="#aaaaaa"/>
<rect x="133.05" y="163.00" width="2.40" height="15.50" fill="#aaaaaa"/>
<rect x="19.00" y="851.00" width="14.40" height="1.60" fill="#333"/>
<rect x="25.40" y="844.60" width="1.60" height="14.40" fill="#333"/>
<path d="M868,911.6 L877.4,920.35 L868,929.2 L858.6,920.35 Z" fill="#f3f3f3" stroke="#333" stroke-width="2.1" stroke-linejoin="miter"/>
<path d="M868,909.6 L879.6,920.35 L876.4,923.4 L864.9,912.6 Z" fill="#333"/>
<path d="M862.1,921.6 H871.9 L867.2,926.2 Z" fill="#e81123"/>
<path d="M879,922.6 V931.4 H873.2 Z" fill="#e81123"/>
<rect x="883.40" y="906.90" width="26.40" height="26.40" fill="#ffffff" stroke="#c9c9c9" stroke-width="1"/>
<line x1="884.20" y1="932.60" x2="909.00" y2="907.60" stroke="#d40a0a" stroke-width="2.0" />
<defs><linearGradient id="gf" x1="0" y1="0" x2="0" y2="1"><stop offset="0" stop-color="#ffd866"/><stop offset="1" stop-color="#f7c243"/></linearGradient><linearGradient id="gs" x1="0" y1="0" x2="1" y2="1"><stop offset="0" stop-color="#16b6f2"/><stop offset="1" stop-color="#0a78d6"/></linearGradient><linearGradient id="gc" x1="0" y1="0" x2="0" y2="1"><stop offset="0" stop-color="#7cf03a"/><stop offset="0.58" stop-color="#35c21a"/><stop offset="0.6" stop-color="#12b030"/><stop offset="1" stop-color="#1cc23a"/></linearGradient><clipPath id="cch"><circle cx="192.5" cy="972.2" r="16.6"/></clipPath></defs>
<path d="M39.2,961.2 Q39.2,959.6 40.8,959.6 H49.6 L52,962 H39.2 Z" fill="#e3a21a"/>
<path d="M39.2,961.7 H67.6 Q69,961.7 69,963.1 V982 Q69,983.4 67.6,983.4 H40.6 Q39.2,983.4 39.2,982 Z" fill="url(#gf)"/>
<path d="M43.8,984.5 V975.2 Q43.8,973.6 45.4,973.6 H61.8 Q63.4,973.6 63.4,975.2 V984.5 H58.5 V977.8 H48.7 V984.5 Z" fill="#3d98e6"/>
<circle cx="116" cy="964" r="8.2" fill="#1aa9ea"/>
<circle cx="130.5" cy="979.5" r="8.2" fill="#0c7fd8"/>
<circle cx="122.9" cy="971.5" r="14.6" fill="url(#gs)"/>
<text x="122.9" y="979.6" font-size="22.5" font-weight="bold" fill="#ffffff" text-anchor="middle" font-family="Liberation Sans, sans-serif">S</text>
<g clip-path="url(#cch)">
<rect x="175" y="955" width="35" height="35" fill="#e33b2e"/>
<path d="M192.5,972.2 L176.5,962.6 L170,975 L178,992 L196,992 L188.5,983 Z" fill="#2da14a"/>
<path d="M192.5,972.2 L208,968.0 H215 V992 H186.5 Z" fill="#fbc116"/>
<path d="M192.5,972.2 L176.2,962.9 L172,975 L178,990 L186.2,990.5 Z" fill="#2da14a"/>
</g>
<circle cx="191.6" cy="971.6" r="8.3" fill="#ffffff"/>
<circle cx="191.6" cy="971.6" r="6.3" fill="#2f7be6"/>
<circle cx="201" cy="981" r="11" fill="#e8710a"/>
<text x="201" y="986.3" font-size="14.5" font-weight="bold" fill="#ffe9d6" text-anchor="middle" font-family="Liberation Sans, sans-serif">H</text>
<path d="M254.4,955.4 H279 V979.5 Q279,989 269.5,989 H255.4 Q245.4,989 245.4,979 V964.4 Q245.4,955.4 254.4,955.4 Z" fill="url(#gc)"/>
<line x1="253.60" y1="964.20" x2="269.60" y2="979.60" stroke="#f4fbf2" stroke-width="5.6" stroke-linecap="round"/>
<line x1="270.20" y1="980.30" x2="272.00" y2="982.00" stroke="#d5ecd5" stroke-width="2.0" stroke-linecap="round"/>
</svg>
<span class="t" id="ttl" style="left:0.0px;top:6.91px;font-size:14.8px;line-height:17.01px;color:#111;letter-spacing:0.062px;word-spacing:0.00px">mi 10</span>
<i class="ul" style="left:21.20px;top:50.70px;width:3.23px;background:#1a1a1a"></i>
<span class="t" id="m1" style="left:2.0px;top:36.08px;font-size:14.5px;line-height:16.66px;color:#1a1a1a;letter-spacing:-0.070px;word-spacing:0.00px">Object</span>
<i class="ul" style="left:98.50px;top:50.70px;width:7.25px;background:#1a1a1a"></i>
<span class="t" id="m2" style="left:75.0px;top:36.08px;font-size:14.5px;line-height:16.66px;color:#1a1a1a;letter-spacing:-0.509px;word-spacing:0.00px">Effects</span>
<i class="ul" style="left:146.00px;top:50.70px;width:9.67px;background:#1a1a1a"></i>
<span class="t" id="m3" style="left:146.0px;top:36.08px;font-size:14.5px;line-height:16.66px;color:#1a1a1a;letter-spacing:0.016px;word-spacing:0.00px">Bitmaps</span>
<i class="ul" style="left:244.28px;top:50.70px;width:7.25px;background:#1a1a1a"></i>
<span class="t" id="m4" style="left:230.0px;top:36.08px;font-size:14.5px;line-height:16.66px;color:#1a1a1a;letter-spacing:-0.523px;word-spacing:0.00px">Text</span>
<i class="ul" style="left:286.00px;top:50.70px;width:8.86px;background:#1a1a1a"></i>
<span class="t" id="m5" style="left:286.0px;top:36.08px;font-size:14.5px;line-height:16.66px;color:#1a1a1a;letter-spacing:-0.434px;word-spacing:0.00px">Table</span>
<i class="ul" style="left:359.59px;top:50.70px;width:6.47px;background:#1a1a1a"></i>
<span class="t" id="m6" style="left:351.0px;top:36.08px;font-size:14.5px;line-height:16.66px;color:#1a1a1a;letter-spacing:-0.272px;word-spacing:0.00px">Tools</span>
<i class="ul" style="left:415.00px;top:50.70px;width:13.69px;background:#1a1a1a"></i>
<span class="t" id="m7" style="left:415.0px;top:36.08px;font-size:14.5px;line-height:16.66px;color:#1a1a1a;letter-spacing:0.320px;word-spacing:0.00px">Window</span>
<i class="ul" style="left:499.00px;top:50.70px;width:10.48px;background:#1a1a1a"></i>
<span class="t" id="m8" style="left:499.0px;top:36.08px;font-size:14.5px;line-height:16.66px;color:#1a1a1a;letter-spacing:0.168px;word-spacing:0.00px">Help</span>
<span class="t" id="zm" style="left:373.6px;top:70.08px;font-size:14.5px;line-height:16.66px;color:#1a1a1a;letter-spacing:-0.477px;word-spacing:0.00px">14%</span>
<i class="ul" style="left:739.15px;top:84.70px;width:8.59px;background:#1a1a1a"></i>
<span class="t" id="snap" style="left:703.0px;top:70.08px;font-size:14.5px;line-height:16.66px;color:#1a1a1a;letter-spacing:-0.350px;word-spacing:0.00px">Snap To</span>
<span class="t" id="launch" style="left:881.0px;top:70.08px;font-size:14.5px;line-height:16.66px;color:#1a1a1a;letter-spacing:-0.346px;word-spacing:0.00px">Launch</span>
<span class="t" id="pdf" style="left:326.3px;top:66.67px;font-size:10.2px;line-height:11.72px;color:#333;letter-spacing:0.408px;word-spacing:0.00px">PDF</span>
<span class="t" id="w1" style="left:12.5px;top:108.88px;font-size:14.5px;line-height:16.66px;color:#1a1a1a;letter-spacing:-0.401px;word-spacing:1.20px">50.0 "</span>
<span class="t" id="w2" style="left:12.5px;top:129.78px;font-size:14.5px;line-height:16.66px;color:#1a1a1a;letter-spacing:-0.401px;word-spacing:1.20px">50.0 "</span>
<span class="t" id="units" style="left:383.0px;top:119.88px;font-size:14.5px;line-height:16.66px;color:#1a1a1a;letter-spacing:-0.263px;word-spacing:0.00px">Units:</span>
<span class="t" id="inch" style="left:427.0px;top:119.88px;font-size:14.5px;line-height:16.66px;color:#1a1a1a;letter-spacing:-0.237px;word-spacing:0.00px">inches</span>
<span class="t" id="nud" style="left:612.5px;top:119.88px;font-size:14.5px;line-height:16.66px;color:#1a1a1a;letter-spacing:-0.534px;word-spacing:2.40px">0.01 "</span>
<span class="t" id="d1" style="left:759.5px;top:109.08px;font-size:14.5px;line-height:16.66px;color:#1a1a1a;letter-spacing:-0.534px;word-spacing:2.40px">0.25 "</span>
<span class="t" id="d2" style="left:759.5px;top:129.98px;font-size:14.5px;line-height:16.66px;color:#1a1a1a;letter-spacing:-0.534px;word-spacing:2.40px">0.25 "</span>
<span class="t" id="tab" style="left:-5.6px;top:163.18px;font-size:14.5px;line-height:16.66px;color:#1a1a1a;letter-spacing:-0.041px;word-spacing:0.00px">za T-Shirt.cdr*</span>
<span class="t" id="pg" style="left:88.0px;top:845.28px;font-size:14.5px;line-height:16.66px;color:#1a1a1a;letter-spacing:-0.411px;word-spacing:0.00px">Page 1</span>
<span class="t" id="st" style="left:4.0px;top:914.18px;font-size:14.5px;line-height:16.66px;color:#1a1a1a;letter-spacing:-0.004px;word-spacing:0.00px">click for Rotate/Skew; Dbl-clicking tool selects all objects; Shift+click multi-selects; Alt+click digs</span>
<span class="t" id="none" style="left:916.5px;top:912.88px;font-size:14.5px;line-height:16.66px;color:#1a1a1a;letter-spacing:-0.043px;word-spacing:0.00px">None</span>
</div>
</body></html>
